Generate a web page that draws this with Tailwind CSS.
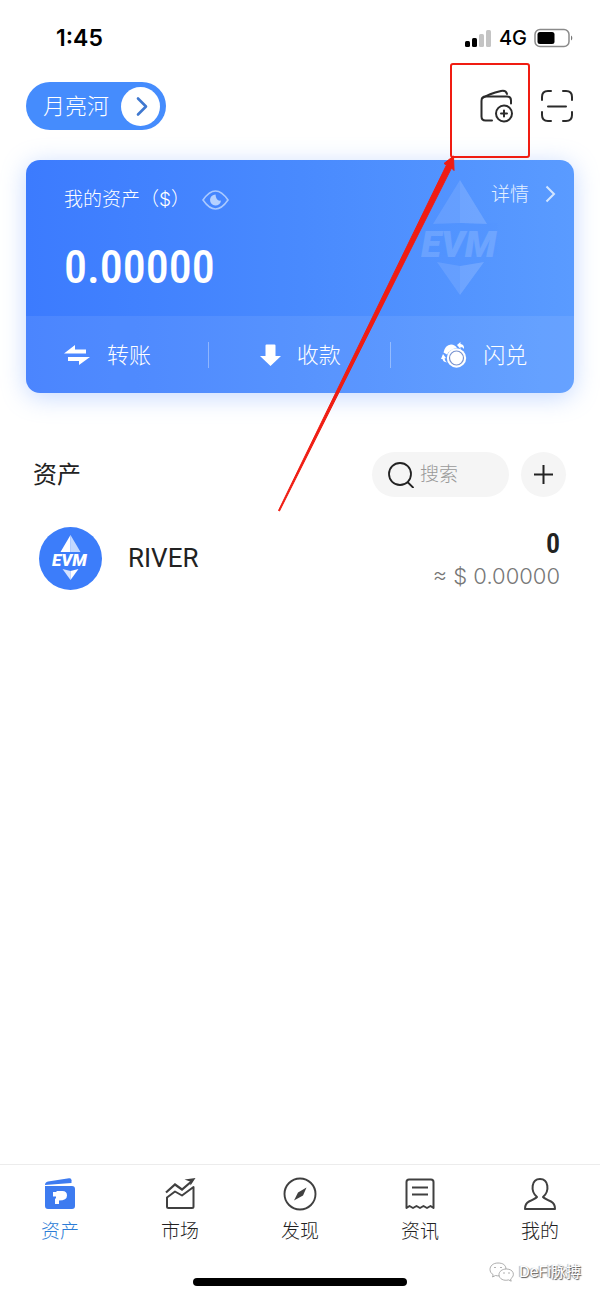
<!DOCTYPE html>
<html lang="zh-CN">
<head>
<meta charset="utf-8">
<meta name="viewport" content="width=device-width, initial-scale=1">
<title>资产</title>
<script src="https://cdn.jsdelivr.net/npm/@tailwindcss/browser@4"></script>
</head>
<body class="flex min-h-screen flex-col overflow-x-hidden bg-white font-['Inter','Noto_Sans_CJK_SC',sans-serif] text-[#222]">

<!-- Status bar -->
<div class="flex h-16 items-center justify-between pt-3 pr-[26px] pl-14 text-black">
  <span class="text-[23px] font-semibold">1:45</span>
  <div class="flex items-center gap-[7px]">
    <svg class="h-5 w-7" viewBox="0 0 28 20" aria-hidden="true">
      <rect x="1" y="13" width="5" height="6" rx="1.5"/>
      <rect x="8" y="10" width="5" height="9" rx="1.5"/>
      <rect x="15" y="6" width="5" height="13" rx="1.5" fill="#c4c4c4"/>
      <rect x="22" y="2" width="5" height="17" rx="1.5" fill="#c4c4c4"/>
    </svg>
    <span class="text-xl font-medium">4G</span>
    <svg class="h-5 w-10" viewBox="0 0 40 20" aria-hidden="true">
      <rect x="1" y="1.500" width="34" height="17" rx="5" fill="none" stroke="#8a8a8a" stroke-width="1.500"/>
      <rect x="3.500" y="4" width="17" height="12" rx="2.500"/>
      <path d="M37 7.500a3 3 0 0 1 0 5z" fill="#777"/>
    </svg>
  </div>
</div>

<!-- Wallet switcher and tools -->
<header class="flex items-center justify-between pt-[18px] pr-[27px] pl-[26px]">
  <button class="flex h-12 items-center gap-3 rounded-full bg-[#458cfd] pr-1.5 pl-[17px] text-[22px] font-light text-white">月亮河
    <svg class="size-[39px]" viewBox="0 0 39 39" aria-hidden="true">
      <circle cx="19.500" cy="19.500" r="19.500" fill="#fff"/>
      <path d="M17 11.500l8 8-8 8" fill="none" stroke="#3f78d0" stroke-width="2.600" stroke-linecap="round" stroke-linejoin="round"/>
    </svg>
  </button>
  <div class="flex items-center gap-7">
    <button class="relative block" aria-label="添加钱包">
      <svg class="h-[34px] w-[33px]" viewBox="0 0 33 34" fill="none" stroke="#2b2b2b" stroke-width="2" stroke-linecap="round" stroke-linejoin="round" aria-hidden="true">
        <path d="M12 31.500H5.500q-4 0-4-4V12q0-4.500 4-4.500H27q4 0 4 4v3"/>
        <path d="M2.500 9C8 5.500 15 3.500 21 2q5-1 6 3"/>
        <circle cx="24" cy="24.500" r="8"/>
        <path d="M24 21.500v6M21 24.500h6"/>
      </svg>
      <!-- Callout frame and arrow drawn over the screen -->
      <svg class="pointer-events-none absolute -top-7 -left-[203px] z-10 h-[452px] w-[256px] max-w-none" viewBox="0 0 256 452" fill="none" aria-hidden="true">
        <rect x="174" y="3" width="78" height="93" rx="2" stroke="#f01c12" stroke-width="2"/>
        <path d="M1.500 449.500L169.500 104 167 102.500 176.500 95 177 109.500 174.500 107 2.500 450z" fill="#f01c12" stroke="#f01c12" stroke-width="1"/>
      </svg>
    </button>
    <button aria-label="扫一扫">
      <svg class="block size-8" viewBox="0 0 32 32" fill="none" stroke="#2b2b2b" stroke-width="2" stroke-linecap="round" aria-hidden="true">
        <path d="M1 10V7q0-6 6-6h3M22 1h3q6 0 6 6v3M31 22v3q0 6-6 6h-3M10 31H7q-6 0-6-6v-3M7 16.500h18"/>
      </svg>
    </button>
  </div>
</header>

<!-- Balance card -->
<section class="mx-[26px] mt-[30px] overflow-hidden rounded-[14px] bg-linear-to-r from-[#3c7bfe] via-[#498afe] to-[#5a9bff] text-white shadow-[0_4px_24px_#7aa8ff70]">
  <div class="relative flex h-[156px] justify-between pt-6 pr-[18px] pl-[38px]">
    <svg class="absolute top-[20px] right-[74px] h-[116px] w-[82px]" viewBox="0 0 82 116" aria-hidden="true">
      <path d="M42 0L15 44l27-1 27 1z" fill="#fff" opacity=".11"/>
      <path d="M42 0v43l27 1z" fill="#fff" opacity=".06"/>
      <path d="M19 82l23 4 24-4-24 33z" fill="#fff" opacity=".11"/>
      <path d="M42 86l24-4-24 33z" fill="#fff" opacity=".06"/>
      <text x="3" y="77" font-family="Roboto, sans-serif" font-size="37" font-weight="900" font-style="italic" fill="#fff" opacity=".15">EVM</text>
    </svg>
    <div>
      <div class="flex items-center gap-3">
        <h1 class="text-[19px] leading-8 font-light">我的资产（$）</h1>
        <button aria-label="隐藏余额">
          <svg class="block h-5 w-[27px]" viewBox="0 0 27 20" aria-hidden="true">
            <path d="M1 10Q13.500-8 26 10 13.500 28 1 10z" fill="none" stroke="#a9c9ff" stroke-width="1.600"/>
            <path d="M13.500 4.500a5.500 5.500 0 1 0 5.500 6q-5 1-5.500-6z" fill="#b5d1ff"/>
          </svg>
        </button>
      </div>
      <p class="mt-6 font-['Roboto_Condensed',Roboto,sans-serif] text-[46px] leading-[54px] font-medium">0.00000</p>
    </div>
    <a href="#detail" class="flex h-5 items-center gap-4 text-[19px] font-light text-[#e4f0ff]"><span class="pt-0.5">详情</span>
      <svg class="h-[18px] w-[11px]" viewBox="0 0 11 18" aria-hidden="true"><path d="M1.500 1.500l7.500 7.500-7.500 7.500" fill="none" stroke="#d3e6ff" stroke-width="2"/></svg>
    </a>
  </div>
  <div class="grid h-[77px] grid-cols-3 bg-white/8 text-[22px] font-light">
    <button class="flex items-center justify-between">
      <span class="flex items-center gap-4 pl-[38px]">
        <svg class="h-5 w-[27px]" viewBox="0 0 27 20" fill="#fff" aria-hidden="true"><path d="M0 8.500L11 0v4.500h11v4zM26 12L15 20v-4H4v-4z"/></svg><span class="pt-0.5">转账</span>
      </span>
      <span class="h-[26px] w-px bg-white/35"></span>
    </button>
    <button class="flex items-center justify-between">
      <span class="flex items-center gap-4 pl-[51px]">
        <svg class="h-[22px] w-[21px]" viewBox="0 0 21 22" fill="#fff" aria-hidden="true"><path d="M5.500 1.500q0-1 1-1h8q1 0 1 1V12H21L10.500 22 0 12h5.500z"/></svg><span class="pt-0.5">收款</span>
      </span>
      <span class="h-[26px] w-px bg-white/35"></span>
    </button>
    <button class="flex items-center gap-4 pl-[50px]">
      <svg class="h-[26px] w-[26px]" viewBox="0 0 26 26" aria-hidden="true">
        <path d="M2.500 10.500Q4 3 10 2.500q4 0 6 3.500Q9 7 6 12.500z" fill="#fff"/>
        <path d="M16 3l3.500-3v2q4 .5 3.500 5-1-2-3.500-2v2zM2 12l3 4-1.500.5q.5 2.500 2.500 4Q2 20 1.500 17L0 17z" fill="#fff"/>
        <circle cx="15.500" cy="16" r="9.700" fill="#fff"/>
        <circle cx="15.500" cy="16" r="7" fill="#fff" stroke="#7893d0" stroke-width="1.200"/>
      </svg><span class="pt-0.5">闪兑</span>
    </button>
  </div>
</section>

<!-- Asset list -->
<main class="flex-1 pt-[59px] pr-[34px] pl-[33px]">
  <div class="flex items-center justify-between">
    <h2 class="text-2xl font-normal">资产</h2>
    <div class="flex items-center gap-3">
      <label class="flex h-[45px] w-[137px] items-center gap-1.5 rounded-full bg-[#f5f5f5] pl-4">
        <svg class="size-[26px] shrink-0" viewBox="0 0 26 26" fill="none" stroke="#222" stroke-width="1.800" stroke-linecap="round" aria-hidden="true"><circle cx="12" cy="12" r="11"/><path d="M20 20.500l5 5"/></svg>
        <input type="text" placeholder="搜索" aria-label="搜索" class="w-full min-w-0 bg-transparent pt-0.5 text-[19px] font-light outline-none placeholder:text-[#999]">
      </label>
      <button class="grid size-[45px] place-items-center rounded-full bg-[#f5f5f5]" aria-label="添加资产">
        <svg class="size-[19px]" viewBox="0 0 19 19" stroke="#222" stroke-width="2" aria-hidden="true"><path d="M9.500 0v19M0 9.500h19"/></svg>
      </button>
    </div>
  </div>
  <a href="#river" class="mt-[27px] flex items-center px-1.5">
    <svg class="size-[63px]" viewBox="0 0 63 63" aria-hidden="true">
      <circle cx="31.500" cy="31.500" r="31.500" fill="#3c7dfa"/>
      <path d="M31.500 8L21.500 25h10z" fill="#fff"/><path d="M31.500 8v17h10z" fill="#c3d8ff"/>
      <path d="M23.500 42l8 2v9z" fill="#d5e3ff"/><path d="M39.500 42l-8 2v9z" fill="#fff"/>
      <text x="13" y="39" font-family="Roboto, sans-serif" font-size="17" font-weight="900" font-style="italic" fill="#fff">EVM</text>
    </svg>
    <span class="ml-[26px] font-['Roboto','Noto_Sans_CJK_SC',sans-serif] text-[26px]">RIVER</span>
    <span class="ml-auto flex flex-col items-end pt-1">
      <span class="font-['Roboto_Condensed',Roboto,sans-serif] text-[28px] leading-8 font-semibold">0</span>
      <span class="font-['Inter',sans-serif] text-[22px] leading-8 font-light text-[#777]">≈ $ 0.00000</span>
    </span>
  </a>
</main>

<!-- Tab bar -->
<footer class="border-t border-[#ececec]">
  <nav class="grid grid-cols-5 pt-[13px] text-[19px] leading-7 font-light text-[#222]">
    <a href="#assets" class="flex flex-col items-center gap-2 text-[#2b7cd6]">
      <svg class="h-8 w-8" viewBox="0 0 32 32" fill="#3d7bf0" aria-hidden="true">
        <path d="M1 7Q1 4 4 3.500L25 .3q2.500-.3 2.500 2V5z"/>
        <path fill-rule="evenodd" d="M1 8h27q3 0 3 3v17q0 3-3 3H4q-3 0-3-3zM9 14v4.500h3v2h-1V26h4v-3.500q8 0 8-5t-5.500-4.500h-5v1z"/>
      </svg>资产</a>
    <a href="#market" class="flex flex-col items-center gap-2">
      <svg class="h-8 w-8" viewBox="0 0 32 32" fill="none" stroke="#404040" stroke-width="2.200" aria-hidden="true">
        <path d="M2 14.500l9-8 7 5L28 3"/><path d="M20.500 1.500L31.500 0 26.500 7.500 26 3.500z" fill="#404040" stroke="none"/>
        <path d="M3 19.500l8-6 7 4L29.500 9v19.500q0 1.500-1.500 1.500H4.500Q3 30 3 28.500z" stroke-width="2" stroke-linejoin="round"/>
      </svg>市场</a>
    <a href="#discover" class="flex flex-col items-center gap-2">
      <svg class="h-8 w-8 overflow-visible" viewBox="0 0 32 32" aria-hidden="true">
        <circle cx="16" cy="16" r="15.500" fill="none" stroke="#404040" stroke-width="1.900"/>
        <path d="M22.500 9.500l-3.500 8-9 5 4-8z" fill="#404040"/>
      </svg>发现</a>
    <a href="#news" class="flex flex-col items-center gap-2">
      <svg class="h-8 w-8" viewBox="0 0 32 32" fill="none" stroke="#404040" stroke-width="2" stroke-linejoin="round" aria-hidden="true">
        <path d="M2.500 30V4q0-2.500 2.500-2.500h22q2.500 0 2.500 2.500v26l-3-2-3.500 2-3.500-2-3.500 2-3.500-2-3.500 2-3.500-2z"/>
        <path d="M8 9.500h16M8 16.500h16"/>
      </svg>资讯</a>
    <a href="#me" class="flex flex-col items-center gap-2">
      <svg class="h-8 w-8" viewBox="0 0 32 32" fill="none" stroke="#404040" stroke-width="2" stroke-linejoin="round" aria-hidden="true">
        <path d="M13 19C6 13 7.500 1 16 1s10 12 3 18q1.500 1.500 8 4.500 4 2 4 7.500H1q0-5.500 4-7.500 6.500-3 8-4.500z"/>
      </svg>我的</a>
  </nav>
  <div class="relative flex h-[52px] items-center justify-center pt-5">
    <div class="h-2 w-[214px] rounded-full bg-black"></div>
    <div class="absolute top-[15px] right-[19px] flex items-center gap-1 text-[15px] text-white [text-shadow:1px_1px_1px_#555,-1px_0_1px_#aaa]">
      <svg class="h-5 w-[26px]" viewBox="0 0 26 20" fill="#fff" stroke="#999" stroke-width=".8" aria-hidden="true">
        <path d="M9 1C4 1 1 4 1 7.500c0 2.200 1.200 4 3.200 5.200L3.500 15l3-1.500c6 1.500 10.500-1.500 10.500-6S14 1 9 1z"/>
        <path d="M17.500 7C13 7 10 9.500 10 12.700c0 4.300 5 6.500 9.500 5.200l2.700 1.300-.6-2.200c5-3.500 3-10-4.100-10z"/>
        <path d="M6 5v1M12 5v1M15 10.500v1M20 10.500v1" stroke-width="1.500"/>
      </svg>
      <span>DeFi脉搏</span>
    </div>
  </div>
</footer>
</body>
</html>
